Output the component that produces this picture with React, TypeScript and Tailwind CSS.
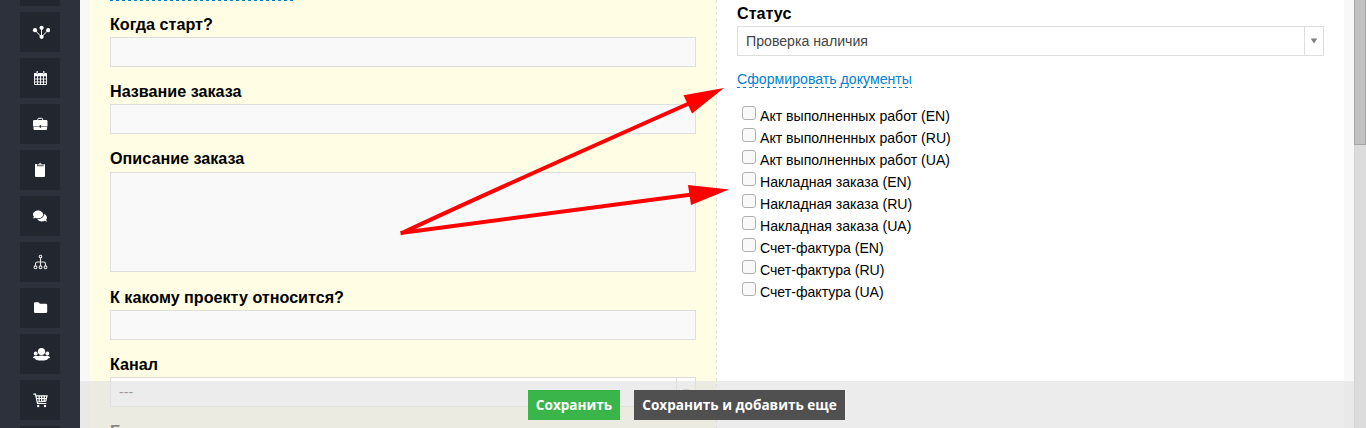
import type { ReactNode } from "react";
import { FaComments } from "react-icons/fa";

function Glyph({ children }: { children: ReactNode }) {
  return (
    <svg viewBox="0 0 20 20" className="size-5 shrink-0 text-white" fill="currentColor">
      {children}
    </svg>
  );
}

const icons: ReactNode[] = [
  null,
  <Glyph>
    <path d="M5 8.2 11.5 15 18.2 8.2M11.5 6v9" fill="none" stroke="currentColor" strokeWidth="1" />
    <circle cx="5" cy="8.2" r="2.1" />
    <circle cx="11.6" cy="5.8" r="2.1" />
    <circle cx="18.2" cy="8.2" r="2.1" />
    <circle cx="11.6" cy="14.8" r="2.1" />
  </Glyph>,
  <Glyph>
    <path d="M4 5.500Q4 5 4.500 5h12q.5 0 .5.500V8.300H4z" />
    <path d="M6.500 3.300h1.500v3H6.500zM13 3.300h1.500v3H13z" />
    <path d="M4.500 8v8.500h12V8M4.500 11h12M4.500 14h12M7.500 8v8.500M10.500 8v8.500M13.500 8v8.500" fill="none" stroke="currentColor" strokeWidth="0.9" />
    <path d="M7.300 4.200v2M13.800 4.200v2" stroke="#22262e" strokeWidth="0.5" />
  </Glyph>,
  <Glyph>
    <path d="M7.800 6.500V5.200q0-.9.900-.9h3.100q.9 0 .9.900v1.300" fill="none" stroke="currentColor" />
    <path d="M4.500 6h11.700q1.300 0 1.300 1.300v4.900h-6.400v-1H9.700v1H3V7.300Q3 6 4.500 6zM3.500 12.800h6.200v1h1.400v-1h6v2.200q0 1-1 1H4.500q-1 0-1-1z" />
  </Glyph>,
  <Glyph>
    <path d="M5.500 4H7v2.200h6.500V4H14q1 0 1 1v11q0 1-1 1H6q-1 0-1-1V5q0-1 .500-1z" />
    <path d="M7.300 5.500V4.400L9 3.900q.2-1.200 1.200-1.200t1.200 1.200l1.700.500v1.100z" fill="#ccc" />
  </Glyph>,
  <FaComments className="size-3.5 text-white" />,
  <Glyph>
    <g fill="none" stroke="#e4e4e4" strokeWidth="1.100">
      <circle cx="10.500" cy="4.500" r="1.300" />
      <circle cx="5.500" cy="15.300" r="1.400" />
      <circle cx="10.500" cy="15.300" r="1.400" />
      <circle cx="15.500" cy="15.300" r="1.400" />
      <path d="M10.500 5.800v8.100M5.500 13.900V12q0-2 2-2h6q2 0 2 2v1.900" />
    </g>
  </Glyph>,
  <Glyph>
    <path d="M4 5.500q0-1.300 1.200-1.300h3.200q1 0 1.300 1.500h6.200q1.300 0 1.300 1.300v6.700q0 1.300-1.300 1.300H5.300Q4 15 4 13.700z" />
  </Glyph>,
  <Glyph>
    <circle cx="11.500" cy="7.500" r="3.600" />
    <circle cx="5.700" cy="9.500" r="1.900" />
    <circle cx="17.300" cy="9.500" r="1.900" />
    <path d="M3 14q0-2 3-2.300 1.500 0 2.200.600 1-.8 3.300-.8t3.300.8q.700-.600 2.200-.600 3 .300 3 2.300l-2 .400q-.500 2-6.500 2T5 14.400z" />
  </Glyph>,
  <Glyph>
    <path d="M3.300 4.200h2.200l2 9.300h8.800M6 5.900h11l-1.200 5.300-8.700.8M6.500 8.500h9.800M9.200 6v5.500M11.700 6v5.500M14.200 6v5.200" fill="none" stroke="currentColor" strokeWidth="1.200" />
    <circle cx="8.200" cy="16" r="1.200" />
    <circle cx="15" cy="16" r="1.200" />
  </Glyph>,
  null,
];

function Label({ children }: { children: ReactNode }) {
  return <div className="h-[18px] shrink-0 text-[16.15px] leading-4 font-bold">{children}</div>;
}

function Field({ label, className }: { label: string; className: string }) {
  return (
    <div className="flex flex-col">
      <Label>{label}</Label>
      <div className={"border border-[#dedede] bg-[#f9f9f9] " + className} />
    </div>
  );
}

function Select({ value, muted }: { value: string; muted?: boolean }) {
  return (
    <div className="flex h-[30px] shrink-0 border border-[#dedede] bg-white text-[14.15px] leading-7">
      <span className={"flex-1 pl-2 " + (muted ? "text-[#333]" : "text-[#444]")}>{value}</span>
      <span className="flex w-[19px] items-center justify-center border-l border-[#dedede] pr-px">
        <svg viewBox="0 0 6 6" className="size-1.5" fill="#808080">
          <path d="M0 .500h6v.5L3 5.500 0 1z" />
        </svg>
      </span>
    </div>
  );
}

const documents = [
  "Акт выполненных работ (EN)",
  "Акт выполненных работ (RU)",
  "Акт выполненных работ (UA)",
  "Накладная заказа (EN)",
  "Накладная заказа (RU)",
  "Накладная заказа (UA)",
  "Счет-фактура (EN)",
  "Счет-фактура (RU)",
  "Счет-фактура (UA)",
];

export default function App() {
  return (
    <div className="relative flex h-[428px] w-[1366px] overflow-hidden bg-[#f8f8f8] font-['Liberation_Sans',Arial,sans-serif] text-black">
      <nav className="-mt-[34px] flex w-20 shrink-0 flex-col items-center gap-1.5 bg-[#2d313c]">
        {icons.map((icon, i) => (
          <a key={i} className="flex size-10 shrink-0 items-center justify-center bg-[#22262e]">
            {icon}
          </a>
        ))}
      </nav>

      <main className="flex flex-1 px-2.5">
        <section className="flex w-[626px] shrink-0 flex-col bg-[#fffde3] px-5">
          <div className="h-px w-[183px] shrink-0 bg-[repeating-linear-gradient(90deg,#0082d0_0_3px,transparent_3px_6px)]" />
          <div className="mt-[15px] flex flex-col gap-4">
            <Field label="Когда старт?" className="mt-[3px] h-[30px]" />
            <Field label="Название заказа" className="mt-[3px] h-[30px]" />
            <Field label="Описание заказа" className="mt-1 h-[100px]" />
          </div>
          <div className="mt-[17px] flex flex-col">
            <Field label="К какому проекту относится?" className="mt-[3px] mb-4 h-[30px]" />
            <Label>Канал</Label>
            <div className="mt-[3px] mb-4">
              <Select value="---" muted />
            </div>
            <Label>Б</Label>
          </div>
        </section>
        <div className="w-px shrink-0 bg-white bg-[repeating-linear-gradient(180deg,#dedede_0_3px,transparent_3px_6px)]" />

        <section className="flex flex-1 flex-col bg-white px-5">
          <div className="mt-[5px] mb-[3px]">
            <Label>Статус</Label>
          </div>
          <Select value="Проверка наличия" />
          <div className="mt-3.5 flex h-[18px]">
            <a className="h-[18px] bg-[repeating-linear-gradient(90deg,#0082d0_0_3px,transparent_3px_6px)] bg-[length:100%_1px] bg-bottom bg-no-repeat text-[14.15px] leading-[18px] text-[#0082d0]">
              Сформировать документы
            </a>
          </div>
          <ul className="mt-[17px] flex flex-col pl-[5px]">
            {documents.map((name) => (
              <li key={name} className="flex h-[22px] gap-1">
                <span className="mt-px size-3.5 shrink-0 rounded-[3px] border border-[#b0b0b0] bg-[#f9f9f9]" />
                <span className="text-[14.1px] leading-[22px]">{name}</span>
              </li>
            ))}
          </ul>
        </section>
      </main>

      <div className="flex w-3 shrink-0 flex-col border-l border-[#d2d2d2] bg-[#dcdcdc]">
        <div className="-ml-px h-[145px] border border-t-0 border-[#a6a6a6] bg-[#c1c1c1]" />
      </div>

      <footer className="absolute top-[381px] right-3 bottom-0 left-20 flex gap-3.5 bg-[#dfdfdf]/60 pt-[9px] pl-[448px] font-['Open_Sans','Noto_Sans',sans-serif] text-[13.6px] font-bold text-white">
        <button className="h-[30px] w-[92px] bg-[#3ab54a] whitespace-nowrap">Сохранить</button>
        <button className="h-[30px] w-[211px] bg-[#505050] whitespace-nowrap">Сохранить и добавить еще</button>
      </footer>

      <svg className="pointer-events-none absolute inset-0 h-[428px] w-[1366px]" viewBox="0 0 1366 428" fill="none">
        <path d="M401 233.500Q465 203 690 103M400.500 233 692 194.500" stroke="red" strokeWidth="4" />
        <path d="M724 88 683.500 95.300 692 113.500zM729 189.500 688 185 691 205z" fill="red" />
      </svg>
    </div>
  );
}
